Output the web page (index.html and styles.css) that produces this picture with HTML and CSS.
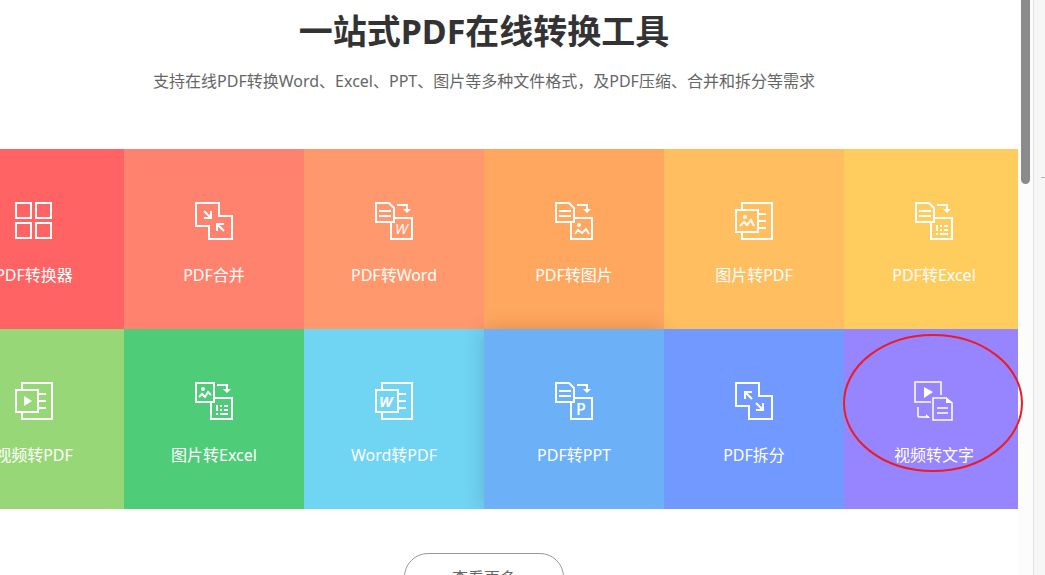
FILE: index.html
```html
<!DOCTYPE html>
<html lang="zh-CN">
<head>
<meta charset="utf-8">
<title>一站式PDF在线转换工具</title>
<link rel="stylesheet" href="styles.css">
</head>
<body>
<svg class="symbols" aria-hidden="true">
  <symbol id="doc" viewBox="0 0 40 40"><path d="M2 2H15L20 7V21H2ZM5 10H17M5 15H17"/></symbol>
  <symbol id="turn" viewBox="0 0 40 40"><path d="M23 4H33V9"/><path class="fill" d="M29 8H37L33 12Z"/></symbol>
  <symbol id="box" viewBox="0 0 40 40"><path d="M21 17H38V38H17V21"/></symbol>
  <symbol id="sheet" viewBox="0 0 40 40"><path d="M23 24V30M23 32V34M26 25H28M30 25H34M26 29H28M30 29H34M26 33H34"/></symbol>
  <symbol id="page" viewBox="0 0 40 40"><path d="M8 9V2H38V38H8V31M2 9H24V31H2ZM25 13H32M25 20H32M25 27H32"/></symbol>
  <symbol id="split" viewBox="0 0 40 40"><path d="M2 2H25V15H38V38H15V25H2Z"/></symbol>
</svg>
<div class="window">
  <main class="page">
    <div class="content">
      <h1 class="title">一站式PDF在线转换工具</h1>
      <p class="subtitle">支持在线PDF转换Word、Excel、PPT、图片等多种文件格式，及PDF压缩、合并和拆分等需求</p>
      <nav class="tiles">
        <a class="tile red" href="#"><svg class="icon" viewBox="0 0 40 40"><path d="M2 2H17V17H2ZM22 2H37V17H22ZM2 22H17V37H2ZM22 22H37V37H22Z"/></svg><span>PDF转换器</span></a>
        <a class="tile coral" href="#"><svg class="icon" viewBox="0 0 40 40"><use href="#split"/><path d="M10 10L17 17M17 10V17H10M23 30V23H30M23 23L30 30"/></svg><span>PDF合并</span></a>
        <a class="tile salmon" href="#"><svg class="icon" viewBox="0 0 40 40"><use href="#doc"/><use href="#turn"/><use href="#box"/><text class="letter" x="21" y="33">W</text></svg><span>PDF转Word</span></a>
        <a class="tile orange" href="#"><svg class="icon" viewBox="0 0 40 40"><use href="#doc"/><use href="#turn"/><use href="#box"/><circle class="fill" cx="25" cy="24" r="2"/><path d="M21 33L24 29L28 32L32 28L35 33"/></svg><span>PDF转图片</span></a>
        <a class="tile amber" href="#"><svg class="icon" viewBox="0 0 40 40"><use href="#page"/><circle class="fill" cx="11" cy="16" r="2"/><path d="M6 25L10 21L13 24L17 19L20 25"/></svg><span>图片转PDF</span></a>
        <a class="tile yellow" href="#"><svg class="icon" viewBox="0 0 40 40"><use href="#doc"/><use href="#turn"/><use href="#box"/><use href="#sheet"/></svg><span>PDF转Excel</span></a>
        <a class="tile lime" href="#"><svg class="icon" viewBox="0 0 40 40"><use href="#page"/><path class="fill" d="M10 15L18 20L10 25Z"/></svg><span>视频转PDF</span></a>
        <a class="tile green" href="#"><svg class="icon" viewBox="0 0 40 40"><path d="M2 2H20V21H2Z"/><use href="#turn"/><use href="#box"/><use href="#sheet"/><circle class="fill" cx="9" cy="8" r="2"/><path d="M5 16L8 13L11 16L14 11L17 14"/></svg><span>图片转Excel</span></a>
        <a class="tile cyan" href="#"><svg class="icon" viewBox="0 0 40 40"><use href="#page"/><text class="letter bold" x="5" y="26">W</text></svg><span>Word转PDF</span></a>
        <a class="tile sky active" href="#"><svg class="icon" viewBox="0 0 40 40"><use href="#doc"/><use href="#turn"/><use href="#box"/><text class="letter upright" x="22" y="34">P</text></svg><span>PDF转PPT</span></a>
        <a class="tile blue" href="#"><svg class="icon" viewBox="0 0 40 40"><use href="#split"/><path d="M11 18V11H18M11 11L18 18M22 22L29 29M29 22V29H22"/></svg><span>PDF拆分</span></a>
        <a class="tile violet" href="#"><svg class="icon thin" viewBox="0 0 40 40"><path d="M17 21H1V1H27V14M32 17H19V39H38V22L32 17M23 27H34M23 32H34M4 26V35Q4 36 5 36H15"/><path class="fill" d="M10 6L19 11L10 17ZM32 16L39 22H32ZM12 33L16 37H12Z"/></svg><span>视频转文字</span></a>
      </nav>
      <button class="more" type="button">查看更多</button>
    </div>
  </main>
  <div class="track"><div class="thumb"></div></div>
  <aside class="edge"><div class="tick"></div></aside>
</div>
<svg class="marker" viewBox="0 0 182 140" aria-hidden="true"><ellipse cx="91" cy="70" rx="89" ry="68"/></svg>
</body>
</html>
```
FILE: styles.css
```css
* { box-sizing: border-box; }

body {
  margin: 0;
  background: #fff;
  font-family: "Noto Sans", "Noto Sans CJK SC", sans-serif;
  font-size: 16px;
  overflow: hidden;
}

.symbols { display: none; }

.window {
  display: flex;
  height: 100vh;
  overflow: hidden;
}

.page {
  flex: 1;
  min-width: 0;
  overflow: hidden;
}

.content {
  display: flex;
  flex-direction: column;
  align-items: center;
  width: 1080px;
  margin-left: -56px;
  padding-top: 6px;
}

.title {
  margin: 0;
  color: #333;
  font-size: 34px;
  font-weight: 700;
  line-height: 50px;
}

.subtitle {
  margin: 13px 0 0;
  color: #666;
  line-height: 24px;
}

.tiles {
  display: grid;
  grid-template-columns: repeat(6, 1fr);
  width: 100%;
  margin-top: 56px;
  overflow: hidden;
}

.tile {
  position: relative;
  display: flex;
  flex-direction: column;
  align-items: center;
  gap: 22px;
  height: 180px;
  padding-top: 52px;
  color: #fff;
  line-height: 24px;
  text-decoration: none;
}

.active { box-shadow: 0 0 20px rgba(0, 0, 0, 0.16); }

.red { background: #ff6364; }
.coral { background: #ff826e; }
.salmon { background: #ff986c; }
.orange { background: #ffa75f; }
.amber { background: #ffbe5f; }
.yellow { background: #ffcc5e; }
.lime { background: #98d778; }
.green { background: #4fcc78; }
.cyan { background: #70d4f3; }
.sky { background: #6cb0f7; }
.blue { background: #7299ff; }
.violet { background: #9784ff; }

.icon {
  width: 40px;
  height: 40px;
  fill: none;
  stroke: #fff;
  stroke-width: 2;
}

.thin { stroke-width: 1.5; }

.fill {
  fill: #fff;
  stroke: none;
}

.letter {
  fill: #fff;
  stroke: none;
  font: italic 500 15px "Open Sans", sans-serif;
}

.bold { font-weight: 700; }

.upright {
  font-style: normal;
  font-weight: 600;
  font-size: 16px;
}

.more {
  width: 160px;
  height: 48px;
  margin-top: 44px;
  border: 1px solid #999;
  border-radius: 24px;
  background: #fff;
  color: #666;
  font: inherit;
}

.track {
  width: 15px;
  padding-left: 3px;
  background: #fcfcfc;
}

.thumb {
  width: 9px;
  height: 184px;
  border-radius: 0 0 5px 5px;
  background: #8b8b8b;
}

.edge {
  width: 12px;
  padding: 177px 0 0 7px;
  border-left: 1px solid #e2e2e2;
  background: #f6f6f6;
}

.tick {
  height: 1px;
  background: #b5b5b5;
}

.marker {
  position: absolute;
  left: 842px;
  top: 333px;
  width: 182px;
  height: 140px;
  fill: none;
  stroke: #ed1c24;
  stroke-width: 2;
  pointer-events: none;
}
```
